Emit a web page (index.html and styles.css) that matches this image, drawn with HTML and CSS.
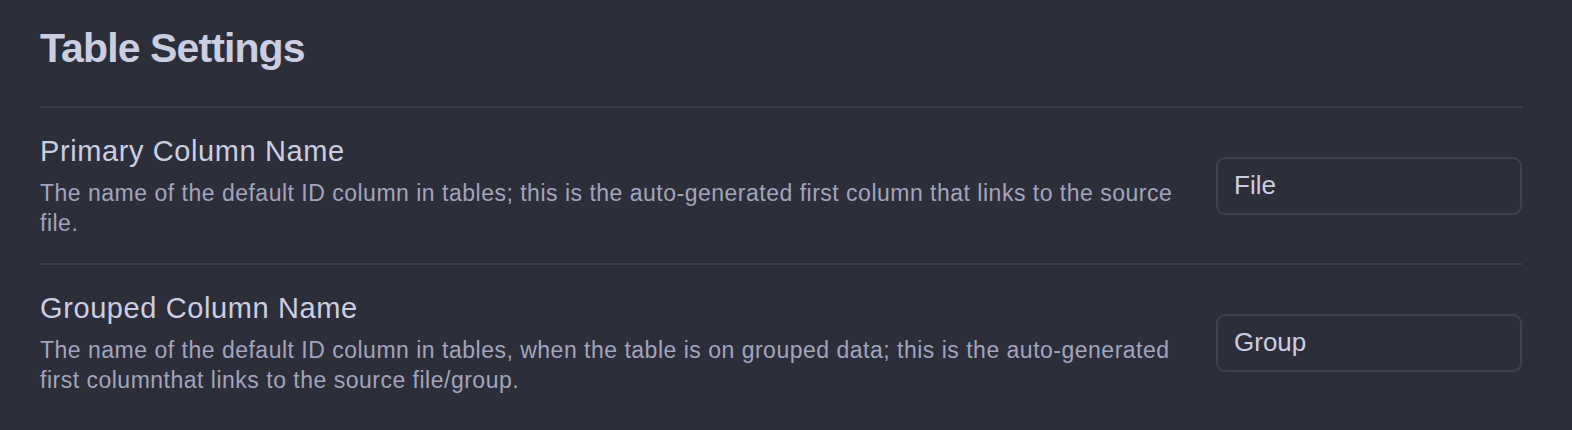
FILE: index.html
```html
<!DOCTYPE html>
<html>
<head>
<meta charset="utf-8">
<link rel="stylesheet" href="styles.css">
</head>
<body>
<div class="page">
  <h1 class="title">Table Settings</h1>
  <div class="setting">
    <div class="info">
      <div class="name">Primary Column Name</div>
      <div class="desc">The name of the default ID column in tables; this is the auto-generated first column that links to the source file.</div>
    </div>
    <div class="control"><input class="text-input" type="text" value="File"></div>
  </div>
  <div class="setting">
    <div class="info">
      <div class="name">Grouped Column Name</div>
      <div class="desc">The name of the default ID column in tables, when the table is on grouped data; this is the auto-generated first columnthat links to the source file/group.</div>
    </div>
    <div class="control"><input class="text-input" type="text" value="Group"></div>
  </div>
</div>
</body>
</html>
```

FILE: styles.css
```css
html, body {
  margin: 0;
  padding: 0;
  background: #2c2e3a;
  height: 100%;
  overflow: hidden;
}
.page {
  padding: 24px 50px 0 40px;
  font-family: "Liberation Sans", Arial, sans-serif;
}
.title {
  margin: 0 0 34px 0;
  font-size: 41px;
  line-height: 48px;
  font-weight: 700;
  letter-spacing: -0.9px;
  color: #cbcde0;
}
.setting {
  display: flex;
  align-items: center;
  gap: 24px;
  border-top: 2px solid #3c3e4c;
  padding: 25px 0;
}
.info {
  flex: 1 1 auto;
  min-width: 0;
}
.name {
  font-size: 29px;
  line-height: 36px;
  letter-spacing: 0.6px;
  color: #cbcde0;
  margin-bottom: 9px;
}
.desc {
  font-size: 23px;
  line-height: 30px;
  letter-spacing: 0.5px;
  color: #a2a4bc;
}
.control {
  flex: 0 0 auto;
}
.text-input {
  box-sizing: border-box;
  width: 306px;
  height: 58px;
  border: 2px solid #3f4152;
  border-radius: 9px;
  background: #2c2e3a;
  color: #cbcde0;
  font-family: "Liberation Sans", Arial, sans-serif;
  font-size: 26px;
  padding: 0 16px;
  outline: none;
}
```
